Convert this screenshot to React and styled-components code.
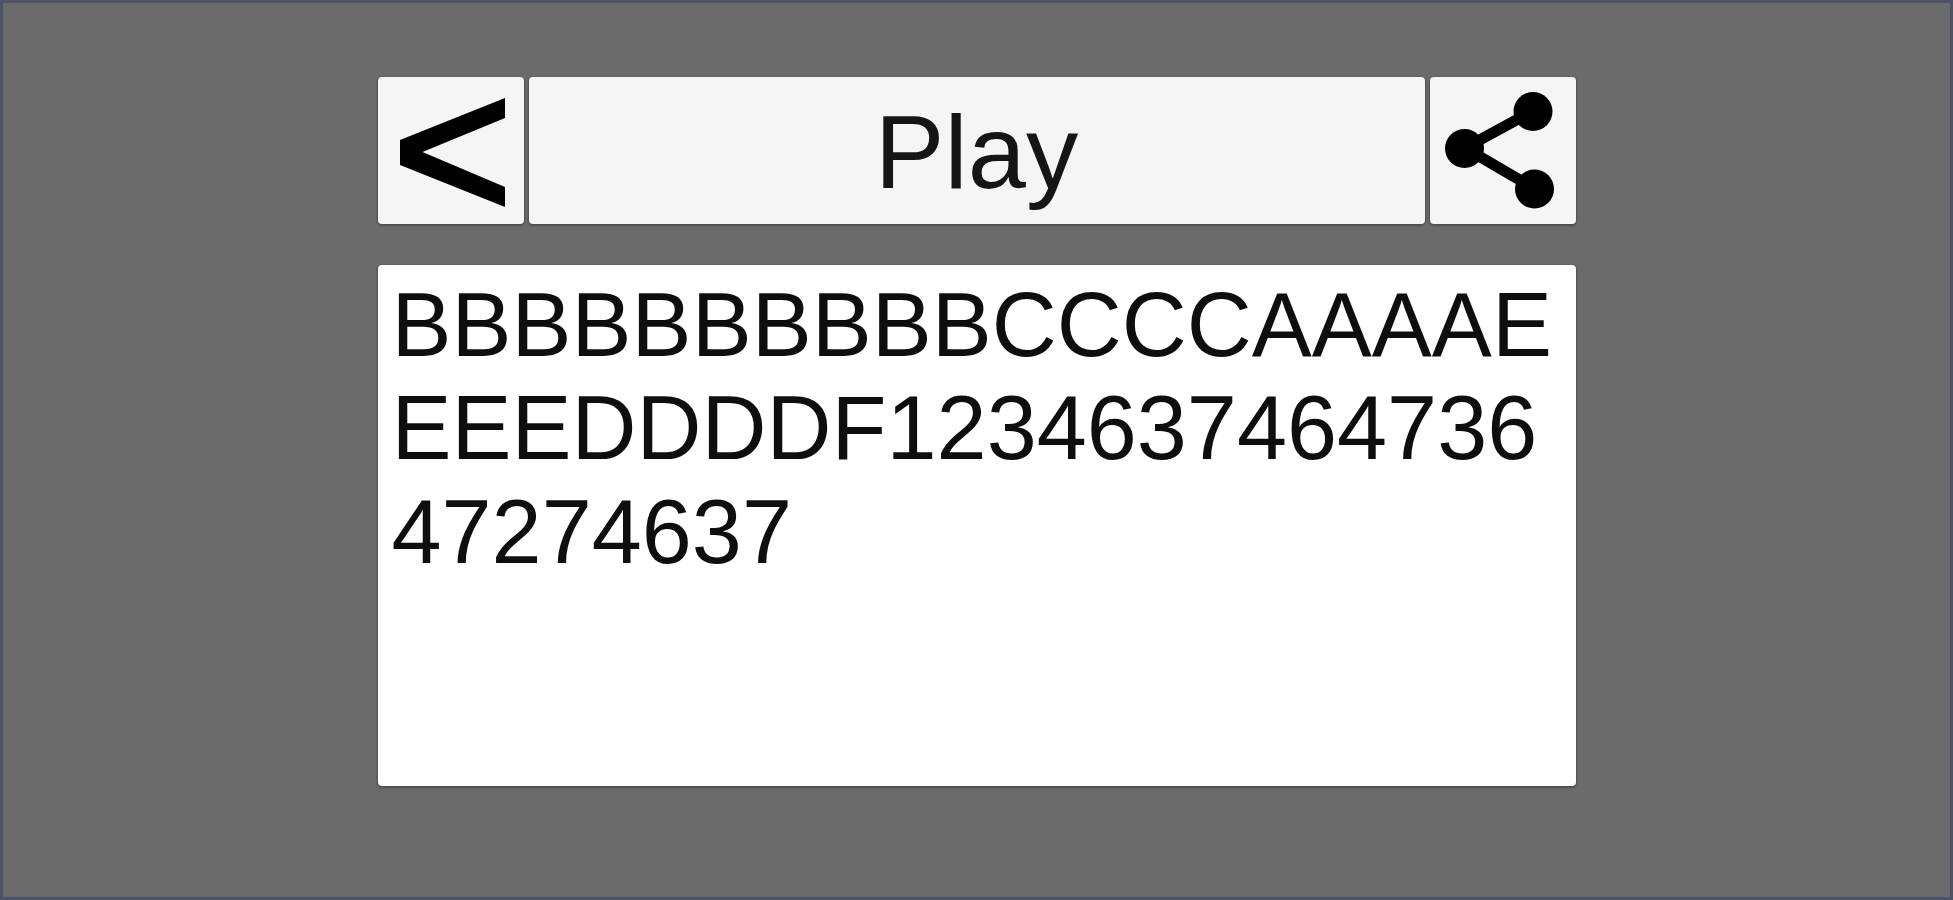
import { useState } from "react";
import styled, { createGlobalStyle } from "styled-components";

const GlobalStyle = createGlobalStyle`
  * {
    box-sizing: border-box;
  }
  body {
    margin: 0;
    background: #6b6b6b;
    font-family: "Liberation Sans", Arial, sans-serif;
  }
`;

const Screen = styled.div`
  display: flex;
  flex-direction: column;
  align-items: center;
  gap: 41px;
  height: 100vh;
  padding-top: 74px;
  border: 3px solid #4c5364;
  background: #6b6b6b;
`;

const Toolbar = styled.header`
  display: grid;
  grid-template-columns: 146px 1fr 146px;
  gap: 5px;
  width: 1198px;
  height: 147px;
`;

const Button = styled.button`
  display: flex;
  align-items: center;
  justify-content: center;
  padding: ${(props) => (props.$icon ? "0" : "3px 0 0")};
  border: 0;
  border-radius: 4px;
  background: #f5f5f5;
  box-shadow: 0 1px 2px 1px rgba(0, 0, 0, 0.28);
  color: ${(props) => (props.$icon ? "#000" : "#151515")};
  font-family: inherit;
  font-size: 104.5px;
  line-height: 1;

  svg {
    display: block;
    width: 146px;
    height: 147px;
  }
`;

const Message = styled.div`
  width: 1198px;
  height: 521px;
  padding: 9px 8px 8px 14px;
  border-radius: 4px;
  background: #fff;
  box-shadow: 0 1px 2px 1px rgba(0, 0, 0, 0.28);
  color: #0e0e0e;
  font-size: 90px;
  line-height: 103.3px;
  word-break: break-all;
`;

function BackIcon() {
  return (
    <svg viewBox="0 0 146 147" fill="currentColor">
      <path d="M127 21V41L44.500 75L127 110V130L22 88V63Z" />
    </svg>
  );
}

function ShareIcon() {
  return (
    <svg viewBox="0 0 146 147" fill="currentColor">
      <path d="M103 34L35 71L105 112" fill="none" stroke="currentColor" strokeWidth="11" />
      <circle cx="103" cy="34.500" r="19.5" />
      <circle cx="34.500" cy="71.500" r="19.5" />
      <circle cx="104.500" cy="112" r="19.5" />
    </svg>
  );
}

export default function App() {
  const [message] = useState("BBBBBBBBBBCCCCAAAAEEEEDDDDF123463746473647274637");

  return (
    <>
      <GlobalStyle />
      <Screen>
        <Toolbar>
          <Button $icon aria-label="Back">
            <BackIcon />
          </Button>
          <Button>Play</Button>
          <Button $icon aria-label="Share">
            <ShareIcon />
          </Button>
        </Toolbar>
        <Message>{message}</Message>
      </Screen>
    </>
  );
}
